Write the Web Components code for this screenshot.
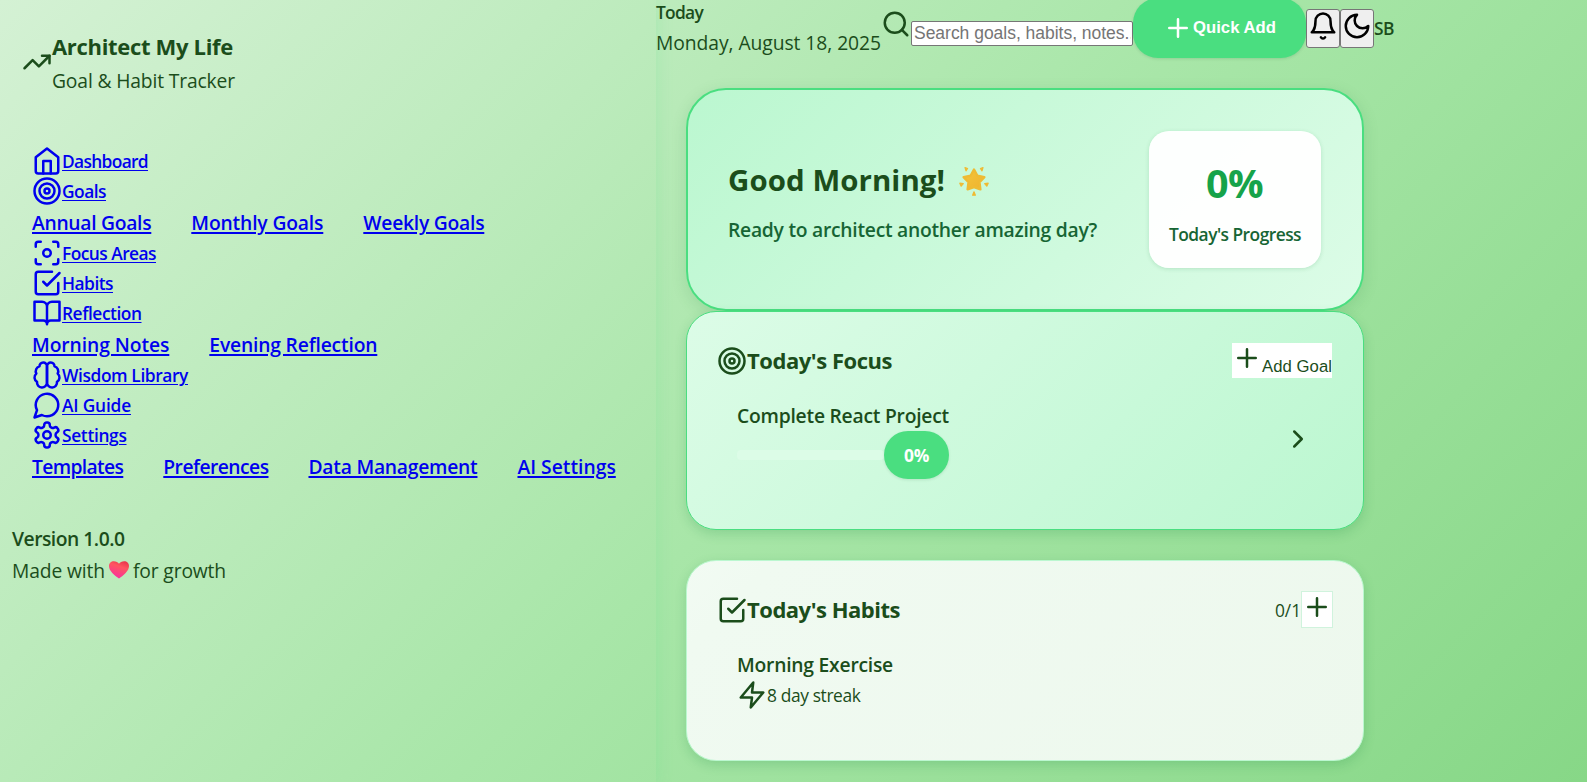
<!DOCTYPE html>
<html lang="en">
<head>
<meta charset="utf-8">
<title>Architect My Life</title>
<style>
html{height:100%}
body{margin:0;height:782px;overflow:hidden;display:flex;align-items:flex-start;font-family:"Open Sans","Noto Sans",sans-serif;font-size:20px;line-height:32px;color:#1b4d1b;background:linear-gradient(135deg,#d4f1d4 0%,#a8e6a8 50%,#84d684 100%) 0 0/100% 880px no-repeat}
</style>
</head>
<body>
<life-sidebar></life-sidebar>
<life-main></life-main>
<script>
const ICONS={
trend:'<path d="m22 7-8.500 8.500-5-5L2 17"/><path d="M16 7h6v6"/>',
home:'<path d="m3 9 9-7 9 7v11a2 2 0 0 1-2 2H5a2 2 0 0 1-2-2z"/><path d="M9 22V12h6v10"/>',
target:'<circle cx="12" cy="12" r="10"/><circle cx="12" cy="12" r="6"/><circle cx="12" cy="12" r="2"/>',
focus:'<circle cx="12" cy="12" r="3"/><path d="M3 7V5a2 2 0 0 1 2-2h2M17 3h2a2 2 0 0 1 2 2v2M21 17v2a2 2 0 0 1-2 2h-2M7 21H5a2 2 0 0 1-2-2v-2"/>',
check:'<path d="m9 11 3 3L22 4"/><path d="M21 12v7a2 2 0 0 1-2 2H5a2 2 0 0 1-2-2V5a2 2 0 0 1 2-2h11"/>',
book:'<path d="M2 3h6a4 4 0 0 1 4 4v14a3 3 0 0 0-3-3H2zM22 3h-6a4 4 0 0 0-4 4v14a3 3 0 0 1 3-3h7z"/>',
brain:'<path d="M12 5a3 3 0 1 0-5.997.125 4 4 0 0 0-2.526 5.770 4 4 0 0 0 .556 6.588A4 4 0 1 0 12 18Z"/><path d="M12 5a3 3 0 1 1 5.997.125 4 4 0 0 1 2.526 5.770 4 4 0 0 1-.556 6.588A4 4 0 1 1 12 18Z"/>',
chat:'<path d="M7.900 20A9 9 0 1 0 4 16.100L2 22Z"/>',
gear:'<path d="M12.220 2h-.440a2 2 0 0 0-2 2v.180a2 2 0 0 1-1 1.730l-.430.250a2 2 0 0 1-2 0l-.150-.080a2 2 0 0 0-2.730.730l-.220.380a2 2 0 0 0 .730 2.730l.150.100a2 2 0 0 1 1 1.720v.510a2 2 0 0 1-1 1.740l-.150.090a2 2 0 0 0-.730 2.730l.220.380a2 2 0 0 0 2.730.730l.150-.080a2 2 0 0 1 2 0l.430.250a2 2 0 0 1 1 1.730V20a2 2 0 0 0 2 2h.440a2 2 0 0 0 2-2v-.180a2 2 0 0 1 1-1.730l.430-.250a2 2 0 0 1 2 0l.150.080a2 2 0 0 0 2.730-.730l.220-.390a2 2 0 0 0-.730-2.730l-.150-.080a2 2 0 0 1-1-1.740v-.500a2 2 0 0 1 1-1.740l.150-.090a2 2 0 0 0 .730-2.730l-.220-.380a2 2 0 0 0-2.730-.730l-.150.080a2 2 0 0 1-2 0l-.430-.250a2 2 0 0 1-1-1.730V4a2 2 0 0 0-2-2z"/><circle cx="12" cy="12" r="3"/>',
search:'<circle cx="11" cy="11" r="8"/><path d="m21 21-4.300-4.300"/>',
plus:'<path d="M5 12h14M12 5v14"/>',
bell:'<path d="M6 8a6 6 0 0 1 12 0c0 7 3 9 3 9H3s3-2 3-9M10.300 21a1.940 1.940 0 0 0 3.400 0"/>',
moon:'<path d="M12 3a6 6 0 0 0 9 9 9 9 0 1 1-9-9Z"/>',
chev:'<path d="m9 18 6-6-6-6"/>',
zap:'<path d="M13 2 3 14h9l-1 8 10-12h-9l1-8z"/>'
};
const shadow=(el,html)=>{const t=document.createElement('template');t.innerHTML=html;el.attachShadow({mode:'open'}).append(t.content.cloneNode(true))};

/* Line icon on a 24-unit grid. */
customElements.define('life-icon',class extends HTMLElement{connectedCallback(){
 if(this.shadowRoot)return;
 shadow(this,`<style>:host{display:block;flex:none;width:30px;height:30px}svg{display:block}</style><svg width="30" height="30" viewBox="0 0 24 24" fill="none" stroke="currentColor" stroke-width="2" stroke-linecap="round" stroke-linejoin="round">${ICONS[this.getAttribute('name')]}</svg>`)}});

/* One line of text whose tracking is tuned to fill the width in "w". */
customElements.define('life-text',class extends HTMLElement{connectedCallback(){
 if(this.shadowRoot)return;
 shadow(this,`<style>:host{display:block;flex:none;white-space:pre;font-size:calc(var(--s,20)*.965px)}:host([small]){--s:18}:host([semi]){font-weight:600}:host([bold]){font-weight:700}span{display:inline-block;text-decoration:var(--u,none);text-underline-offset:var(--uo,auto)}</style><span><slot></slot></span>`);
 const w=+this.getAttribute('w'),s=this.shadowRoot.querySelector('span');
 queueMicrotask(()=>{const n=s.getBoundingClientRect().width;if(n){s.style.letterSpacing=(w-n)/this.textContent.length+'px';this.style.width=w+'px'}})}});

customElements.define('nav-item',class extends HTMLElement{connectedCallback(){
 if(this.shadowRoot)return;
 shadow(this,`<style>:host{display:block}a{display:flex;height:30px;width:max-content;color:#00e;text-decoration:none}life-text{line-height:30px;--u:underline 1px;--uo:2px}</style>
 <a href="#"><life-icon name="${this.getAttribute('icon')}"></life-icon><life-text small semi w="${this.getAttribute('w')}">${this.getAttribute('label')}</life-text></a>`)}});

customElements.define('nav-sub',class extends HTMLElement{connectedCallback(){
 if(this.shadowRoot)return;
 shadow(this,`<style>:host{display:flex;gap:40px;height:32px}a{color:#00e;text-decoration:none}life-text{line-height:33px;--u:underline 2px;--uo:1.5px}</style>`+
 this.getAttribute('items').split('|').map(i=>{const[l,w]=i.split(':');return`<a href="#"><life-text semi w="${w}">${l}</life-text></a>`}).join(''))}});

customElements.define('life-sidebar',class extends HTMLElement{connectedCallback(){
 shadow(this,`<style>:host{display:block;flex:none;box-sizing:border-box;width:656px;height:782px;box-shadow:0 4px 16px rgba(74,222,128,.2)}
 .brand{display:flex;height:66px;padding:28px 0 0 22px}.brand life-icon{margin-top:19px}.brand life-text+life-text{margin-top:1px}
 .name{--s:22.8;line-height:36px}
 nav{padding:52px 0 0 32px}
 footer{padding:41px 0 0 12px}.row{display:flex}.row life-text{line-height:31px}.row svg{margin:4px 3px 0 3px}
 </style>
 <div class="brand"><life-icon name="trend"></life-icon><div><life-text class="name" bold w="181">Architect My Life</life-text><life-text w="183">Goal &amp; Habit Tracker</life-text></div></div>
 <nav>
 <nav-item icon="home" label="Dashboard" w="86"></nav-item>
 <nav-item icon="target" label="Goals" w="44"></nav-item>
 <nav-sub items="Annual Goals:119.3|Monthly Goals:132|Weekly Goals:121"></nav-sub>
 <nav-item icon="focus" label="Focus Areas" w="94"></nav-item>
 <nav-item icon="check" label="Habits" w="51"></nav-item>
 <nav-item icon="book" label="Reflection" w="79.5"></nav-item>
 <nav-sub items="Morning Notes:137.3|Evening Reflection:168"></nav-sub>
 <nav-item icon="brain" label="Wisdom Library" w="126"></nav-item>
 <nav-item icon="chat" label="AI Guide" w="69"></nav-item>
 <nav-item icon="gear" label="Settings" w="64.5"></nav-item>
 <nav-sub items="Templates:91.3|Preferences:105.2|Data Management:169|AI Settings:98.3"></nav-sub>
 </nav>
 <footer><life-text semi w="112.5">Version 1.0.0</life-text><div class="row"><life-text w="93">Made with</life-text>
 <svg width="22" height="22" viewBox="0 0 22 22"><defs><linearGradient id="h" x1=".8" y1="0" x2=".4" y2="1"><stop offset="0" stop-color="#e8344a"/><stop offset=".35" stop-color="#ff5560"/><stop offset="1" stop-color="#f92fa0"/></linearGradient></defs><path fill="url(#h)" d="M11 19.500C6.500 16.500 1 12 1 7 1 4 3.200 2.300 5.800 2.300c2.300 0 4.200 1 5.200 2.500 1-1.500 2.900-2.500 5.200-2.500C18.800 2.300 21 4 21 7c0 5-5.500 9.500-10 12.500z"/></svg>
 <life-text w="93">for growth</life-text></div></footer>`)}});

customElements.define('life-header',class extends HTMLElement{connectedCallback(){
 shadow(this,`<style>:host{display:flex;height:58px;align-items:flex-start}
 .date life-text:first-child{line-height:25px}.date life-text+life-text{line-height:35px}
 life-icon.s{margin-top:9px}
 input{box-sizing:border-box;width:222px;height:25px;margin:21px 0 0;padding:1px 1px 1px 2px;border:1px solid #767676;font:17.5px "Liberation Sans",Arial,sans-serif;border-radius:2px;background:#fff}
 input::placeholder{color:#757575;letter-spacing:-.02px}
 .add{box-sizing:border-box;height:60px;margin-top:-2px;border:0;border-radius:25px;background:#4ade80;color:#fff;display:flex;align-items:center;padding:0 30px;width:173px;box-shadow:0 1px 3px rgba(20,83,45,.15)}
 .add life-text{font-family:"Liberation Sans",Arial,sans-serif;--s:17.3}
 .b{box-sizing:border-box;width:34px;height:39px;margin-top:9px;padding:0;border:1px solid #767676;border-radius:3px;background:#efefef;color:#000;display:flex}.b life-icon{margin:1px 0 0 1px}
 .sb{line-height:57px}
 </style>
 <div class="date"><life-text small semi w="47">Today</life-text><life-text w="225">Monday, August 18, 2025</life-text></div>
 <life-icon class="s" name="search"></life-icon>
 <input placeholder="Search goals, habits, notes...">
 <button class="add"><life-icon name="plus"></life-icon><life-text bold w="83">Quick Add</life-text></button>
 <button class="b"><life-icon name="bell"></life-icon></button><button class="b"><life-icon name="moon"></life-icon></button>
 <life-text class="sb" small semi w="20">SB</life-text>`)}});

customElements.define('life-hero',class extends HTMLElement{connectedCallback(){
 shadow(this,`<style>:host{box-sizing:border-box;display:flex;width:678px;height:223px;border:2px solid #4ade80;border-radius:40px;background:linear-gradient(135deg,#bbf7d0,#dcfce7);box-shadow:0 4px 16px rgba(20,110,50,.14);padding:41px 41px 0 40px;justify-content:space-between}
 .h{display:flex;margin-top:25px}.h life-text{--s:30.5;line-height:48px}.h svg{margin:9px 0 0 12px}
 .r{color:#166534;margin-top:10px}
 .p{box-sizing:border-box;width:172px;height:137px;border-radius:20px;background:rgba(255,255,255,.96);box-shadow:0 1px 4px rgba(20,110,50,.16);color:#166534;padding:20px 0 0 20px}
 .n{--s:41;line-height:64px;color:#16a34a;margin-left:37px}.p life-text+life-text{line-height:29px;margin-top:5px}
 </style>
 <div><div class="h"><life-text bold w="217">Good Morning!</life-text><svg width="34" height="32" viewBox="0 0 34 32"><defs><linearGradient id="g" x1="0" y1="0" x2="1" y2="1"><stop offset="0" stop-color="#f3c63c"/><stop offset="1" stop-color="#efb22e"/></linearGradient></defs><g fill="url(#g)" stroke="#eebb34" stroke-width="2.400" stroke-linejoin="round"><path d="m17 4.500 3.400 6.300 7 1.300-4.900 5.200.9 7-6.400-2.300-6.400 2.300.9-7-4.900-5.200 7-1.300z"/><g stroke-width="1.200"><path d="m8 2.500 2.600 1-1.600 2.300zM26 2.500l-2.600 1L25 5.800zM2.800 18.200l3.500.400-2.100 2.600zM31.200 18.200l-3.500.400 2.100 2.600zM17 26.800l1.400 3.400h-2.800z"/></g></g></svg></div>
 <life-text class="r" semi w="369">Ready to architect another amazing day?</life-text></div>
 <div class="p"><life-text class="n" bold w="57">0%</life-text><life-text small semi w="132">Today's Progress</life-text></div>`)}});

customElements.define('life-card',class extends HTMLElement{connectedCallback(){
 shadow(this,`<style>:host{box-sizing:border-box;display:block;width:678px;border:1px solid #4ade80;border-radius:30px;background:linear-gradient(135deg,#dcfce7,#bbf7d0);box-shadow:0 4px 12px rgba(20,130,60,.2);padding:31px 30px 0}
 :host([plain]){border-color:#bbf7d0;background:linear-gradient(135deg,#f2fbf3,#f0faf1 10%,#edf8ed)}
 .top{display:flex;justify-content:space-between;height:37px}.t{display:flex;margin-top:3px}.t life-text{--s:22.8;line-height:29px}</style>
 <div class="top"><div class="t"><life-icon name="${this.getAttribute('icon')}"></life-icon><life-text bold w="${this.getAttribute('w')}">${this.getAttribute('label')}</life-text></div><slot name="action"></slot></div><slot></slot>`)}});

customElements.define('goal-row',class extends HTMLElement{connectedCallback(){
 shadow(this,`<style>:host{display:flex;justify-content:space-between;padding:20px 20px 0 20px}.bar{width:147px;height:10px;border-radius:4px;background:#dcfce7}.row{display:flex;align-items:center;margin-top:-1px}
 .pill{box-sizing:border-box;width:65px;height:48px;border-radius:24px;background:#4ade80;color:#fff;padding-left:20px;box-shadow:0 1px 3px rgba(20,83,45,.12)}.pill life-text{line-height:48px}life-icon{margin-top:24px}</style>
 <div><life-text semi w="212">Complete React Project</life-text><div class="row"><div class="bar"></div><div class="pill"><life-text small bold w="25">0%</life-text></div></div></div><life-icon name="chev"></life-icon>`)}});

customElements.define('habit-row',class extends HTMLElement{connectedCallback(){
 shadow(this,`<style>:host{display:block;padding:20px 20px 0}.row{display:flex;margin-top:-1px}.row life-text{line-height:31px}</style>
 <life-text semi w="156">Morning Exercise</life-text><div class="row"><life-icon name="zap"></life-icon><life-text small w="93.500">8 day streak</life-text></div>`)}});

customElements.define('tool-button',class extends HTMLElement{connectedCallback(){
 shadow(this,`<style>:host{display:block}button{box-sizing:border-box;display:flex;margin:0 1px 0 0;padding:0;width:100px;height:35px;border:0;background:#fff;color:inherit}
 life-text{font-family:"Liberation Sans",Arial,sans-serif;--s:17.3;line-height:20px;margin-top:14px}
 :host([square]) button{width:32px;height:37px;border:1px solid #d0f3dd;margin:-1px 0 0}</style>
 <button><life-icon name="plus"></life-icon>${this.hasAttribute('square')?'':'<life-text w="70">Add Goal</life-text>'}</button>`)}});

customElements.define('life-main',class extends HTMLElement{connectedCallback(){
 shadow(this,`<style>:host{display:block;flex:1;min-width:0}section{padding:30px 0 0 30px}
 .focus{height:219px}.habits{height:201px;margin-top:30px}.count{display:flex}.count life-text{line-height:37px}</style>
 <life-header></life-header><section><life-hero></life-hero>
 <life-card class="focus" icon="target" label="Today's Focus" w="145"><tool-button slot="action"></tool-button><goal-row></goal-row></life-card>
 <life-card class="habits" plain icon="check" label="Today's Habits" w="153"><div class="count" slot="action"><life-text small w="26">0/1</life-text><tool-button square></tool-button></div><habit-row></habit-row></life-card></section>`)}});
</script>
</body>
</html>
